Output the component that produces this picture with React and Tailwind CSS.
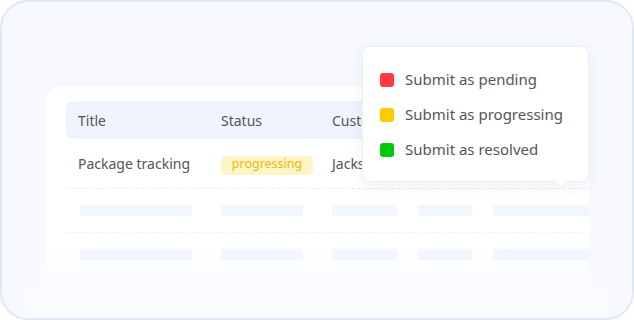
export default function App() {
  const font = { fontFamily: '"Noto Sans", "Open Sans", sans-serif' };
  const bars = ["w-[112px] ml-[2px]", "w-[82px]", "w-[65px]", "w-[54px]", "w-[110px]"];
  return (
    <div className="w-[634px] h-[320px] bg-white" style={font}>
      <div className="relative w-[634px] h-[320px] rounded-[28px] border-2 border-[#dde8fb] bg-[#f7f9ff] overflow-hidden">
        <div className="relative pl-[44px] pt-[85px]">
          <div className="w-[543px] h-[215px] rounded-[12px] bg-gradient-to-b from-white from-75% to-[#f9fbff] overflow-hidden px-[20px] pt-[14px]">
            <div className="w-[540px]">
              <div className="grid grid-cols-[143px_111px_86px_75px_1fr] items-center h-[38px] pl-3 rounded-[6px] bg-[#eff4fe] text-[14px] text-[#555]">
                <span>Title</span>
                <span>Status</span>
                <span className="whitespace-nowrap">Customer</span>
              </div>
              <div className="grid grid-cols-[143px_111px_86px_75px_1fr] items-center h-[50px] pl-3 border-b border-dashed border-[#e6ecf8] text-[14px] text-[#555]">
                <span>Package tracking</span>
                <span>
                  <span className="inline-flex items-center justify-center w-[92px] h-[19px] pb-[2px] rounded-[5px] bg-[#fff4c6] text-[12.5px] text-[#f2b705]">progressing</span>
                </span>
                <span>Jackson</span>
              </div>
              {[0, 1].map((r) => (
                <div key={r} className="grid grid-cols-[143px_111px_86px_75px_1fr] items-center h-[44px] pl-3 border-b border-dashed border-[#eef2fa]">
                  {bars.map((b, i) => (
                    <div key={i} className={`${b} h-[11px] bg-[#f2f6fe]`} />
                  ))}
                </div>
              ))}
            </div>
          </div>
        </div>
        <div className="absolute left-[20px] top-[263px] w-[586px] h-[60px] bg-gradient-to-b from-[#f9fbff]/50 to-[#f9fbff] rounded-t-[4px]" />
        <div className="absolute left-[360px] top-[44px] w-[227px] h-[136px] rounded-[8px] bg-white border border-[#eef0f5] shadow-[0_4px_14px_rgba(40,60,110,0.08)] pt-[15px] pl-[17px] text-[15px] text-[#555]">
          {[
            ["bg-[#ff3d3d]", "Submit as pending"],
            ["bg-[#ffc900]", "Submit as progressing"],
            ["bg-[#00c80b]", "Submit as resolved"],
          ].map(([c, t]) => (
            <div key={t} className="flex items-center h-[35px] gap-[11px]">
              <div className={`w-[14px] h-[14px] rounded-[3px] ${c}`} />
              <span className="whitespace-nowrap">{t}</span>
            </div>
          ))}
          <div className="absolute left-[194px] bottom-[-5px] w-[9px] h-[9px] rotate-45 bg-white border-r border-b border-[#eef0f5]" />
        </div>
      </div>
    </div>
  );
}
